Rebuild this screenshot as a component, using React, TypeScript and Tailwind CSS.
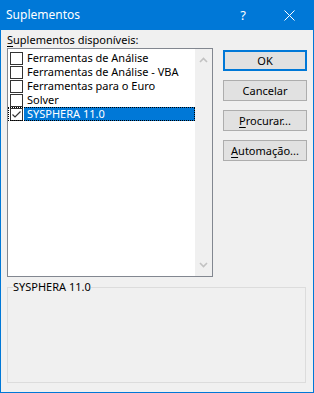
import React from 'react';

const font = { fontFamily: '"Noto Sans", "Open Sans", sans-serif' };

const items = [
  { label: 'Ferramentas de Análise', checked: false },
  { label: 'Ferramentas de Análise - VBA', checked: false },
  { label: 'Ferramentas para o Euro', checked: false },
  { label: 'Solver', checked: false },
  { label: 'SYSPHERA 11.0', checked: true },
];

function CheckBox({ checked }: { checked: boolean }) {
  return (
    <span className="w-[13px] h-[13px] border border-[#333333] bg-white flex items-center justify-center shrink-0">
      {checked && (
        <svg width="11" height="11" viewBox="0 0 11 11">
          <path d="M1.5 5.5 L4 8 L9.5 2.5" fill="none" stroke="#333333" strokeWidth="1.2" />
        </svg>
      )}
    </span>
  );
}

function Button({ children, primary }: { children: React.ReactNode; primary?: boolean }) {
  return (
    <button
      className={`w-[84px] h-[21px] bg-[#e1e1e1] text-[11px] text-black leading-none flex items-center justify-center ${
        primary ? 'border-2 border-[#0078d7]' : 'border border-[#adadad]'
      }`}
    >
      {children}
    </button>
  );
}

export default function App() {
  return (
    <div className="w-[314px] h-[393px] flex flex-col bg-[#0078d7] text-[11px]" style={font}>
      {/* barra de título */}
      <div className="h-[30px] flex items-center text-white shrink-0">
        <span className="pl-[6px] flex-1 text-[12px]">Suplementos</span>
        <span className="w-[46px] text-center text-[13px] leading-none ml-[4px]">?</span>
        <span className="w-[46px] flex justify-center mr-[2px]">
          <svg width="11" height="11" viewBox="0 0 11 11">
            <path d="M0.5 0.5 L10.5 10.5 M10.5 0.5 L0.5 10.5" stroke="white" strokeWidth="1" />
          </svg>
        </span>
      </div>

      <div className="flex-1 bg-[#f0f0f0] mx-[1px] mb-[1px] flex flex-col px-[6px]">
        <div className="flex gap-[10px]">
          <div className="w-[206px] flex flex-col">
            <div className="h-[18px] pt-[2px] leading-[16px] text-black">
              <span className="underline underline-offset-2">S</span>uplementos disponíveis:
            </div>
            <div className="h-[229px] border border-[#828790] bg-white flex">
              <div className="flex-1 pt-[2px]">
                {items.map((it) => (
                  <div
                    key={it.label}
                    className={`h-[14px] flex items-center ${
                      it.checked ? 'outline outline-1 outline-dotted outline-black -outline-offset-1' : ''
                    }`}
                  >
                    <span className="pl-[2px] pr-[1px] flex items-center">
                      <CheckBox checked={it.checked} />
                    </span>
                    <span
                      className={`flex-1 h-full leading-[14px] pl-[3px] ${
                        it.checked ? 'bg-[#0078d7] text-white' : 'text-black'
                      }`}
                    >
                      {it.label}
                    </span>
                  </div>
                ))}
              </div>
              <div className="w-[17px] bg-[#f0f0f0] flex flex-col justify-between items-center py-[8px]">
                <svg width="9" height="6" viewBox="0 0 9 6">
                  <path d="M1 5 L4.5 1.5 L8 5" fill="none" stroke="#c2c2c2" strokeWidth="1.6" />
                </svg>
                <svg width="9" height="6" viewBox="0 0 9 6">
                  <path d="M1 1 L4.5 4.5 L8 1" fill="none" stroke="#c2c2c2" strokeWidth="1.6" />
                </svg>
              </div>
            </div>
          </div>
          <div className="flex flex-col gap-[9px] pt-[20px]">
            <Button primary>OK</Button>
            <Button>Cancelar</Button>
            <Button>
              <span className="underline underline-offset-2">P</span>rocurar...
            </Button>
            <Button>
              <span className="underline underline-offset-2">A</span>utomação...
            </Button>
          </div>
        </div>

        <fieldset className="mt-[3px] h-[103px] border border-[#dcdcdc] mr-[1px] px-[5px]">
          <legend className="px-[0px] text-black leading-[14px]">SYSPHERA 11.0</legend>
        </fieldset>
      </div>
    </div>
  );
}
